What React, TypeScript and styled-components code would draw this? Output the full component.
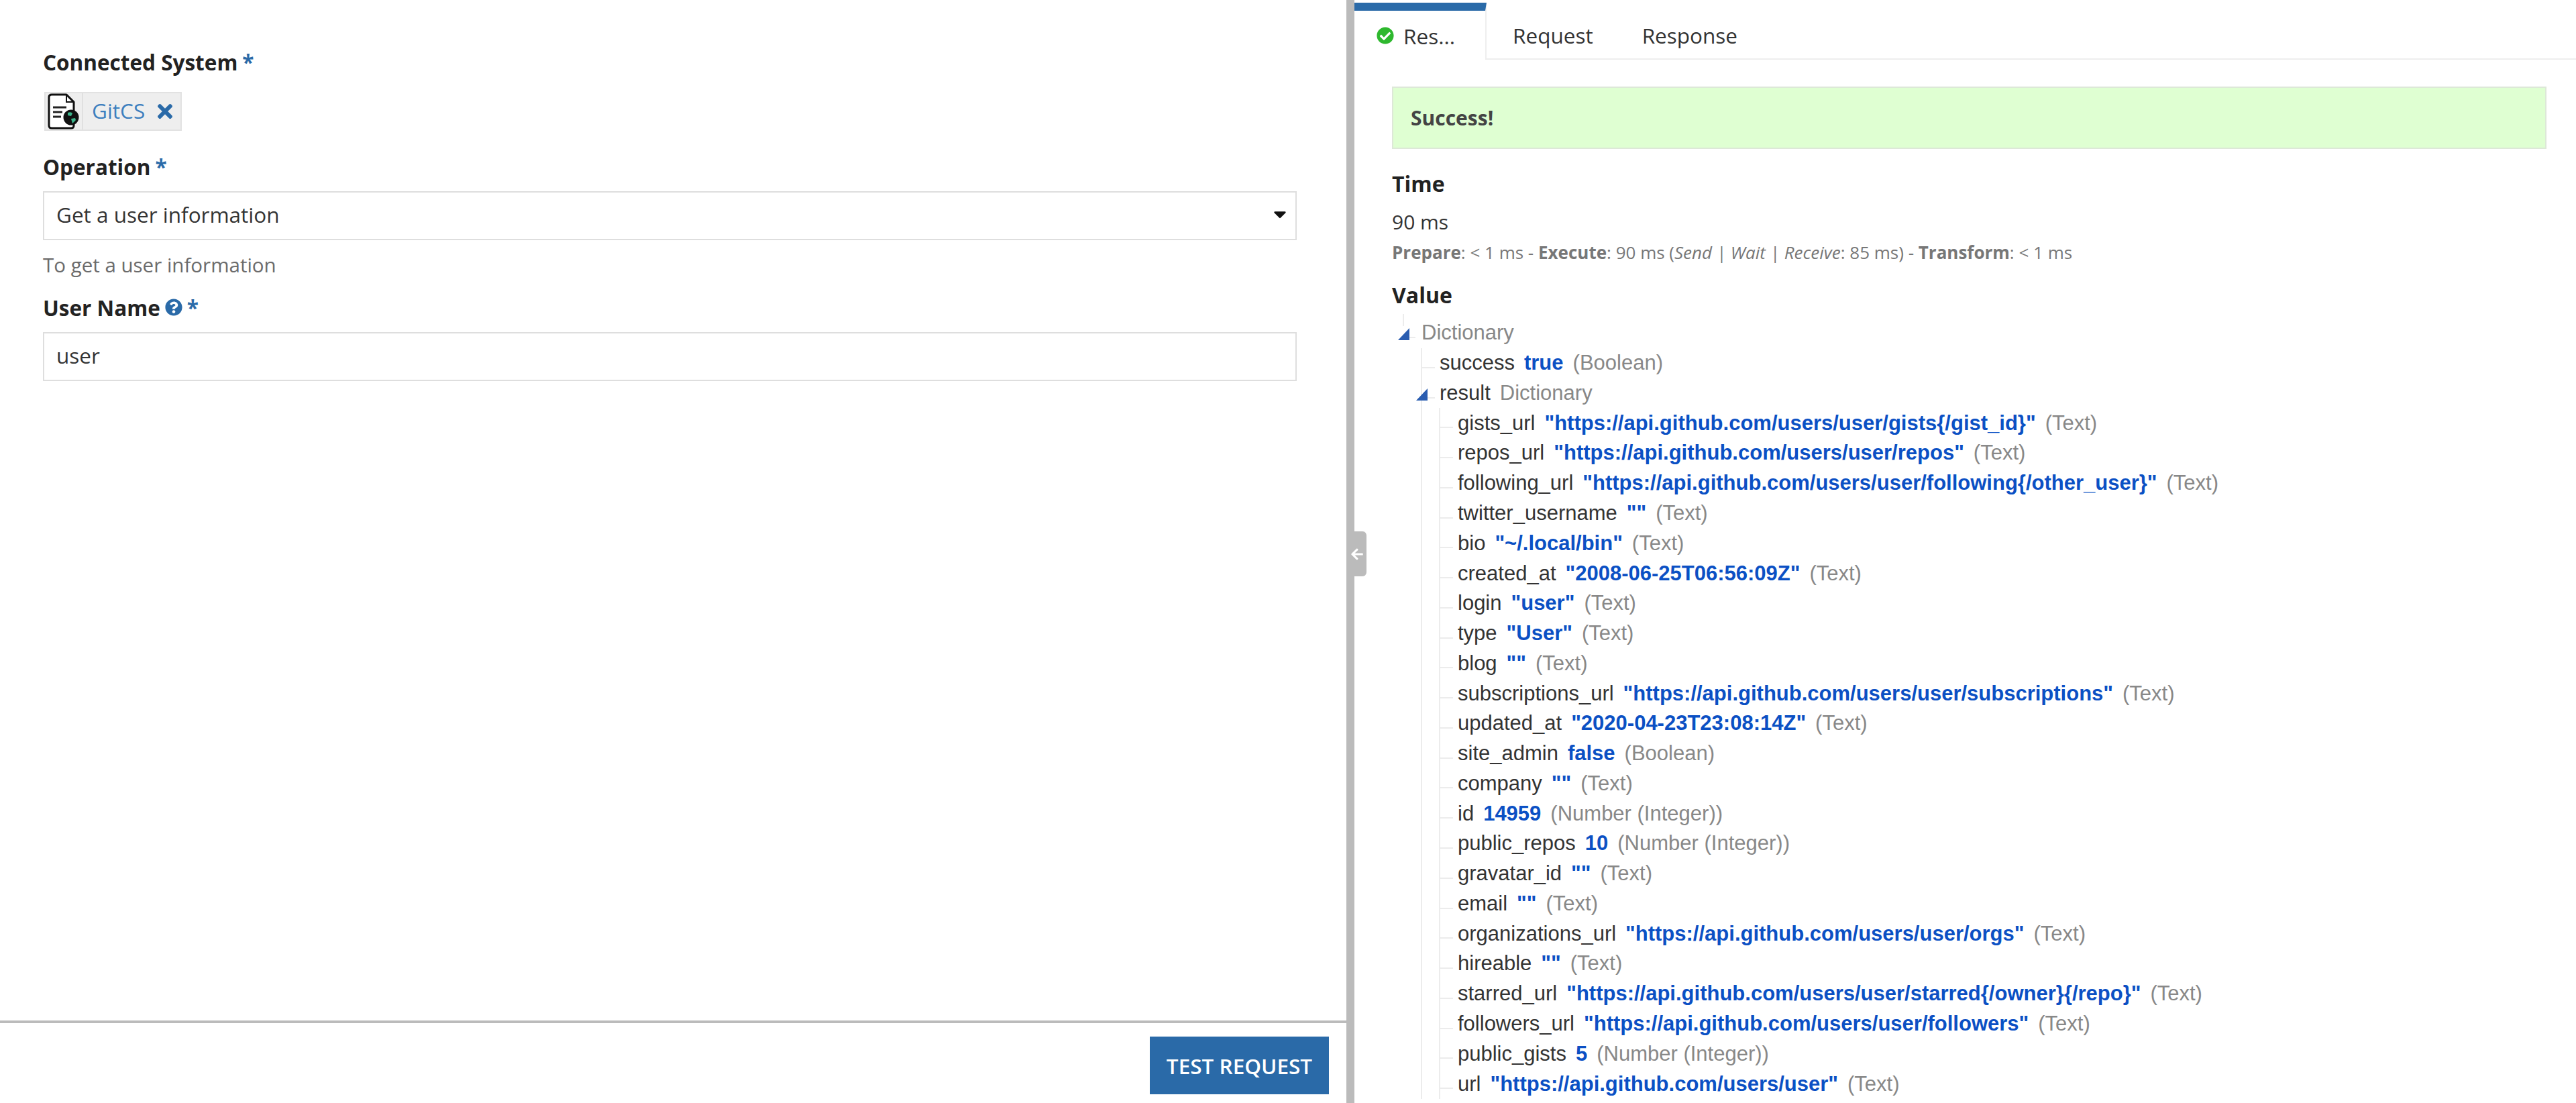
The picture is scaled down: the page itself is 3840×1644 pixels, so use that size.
import React from 'react'
import styled, { createGlobalStyle } from 'styled-components'
import { FaArrowLeft, FaCaretDown, FaCheckCircle, FaQuestionCircle, FaTimes } from 'react-icons/fa'

const GlobalStyle = createGlobalStyle`
  html, body { margin: 0; padding: 0; background: #fff; overflow: hidden; }
  * { box-sizing: border-box; }
  body { font-family: "Open Sans", "Liberation Sans", sans-serif; color: #222; }
`

const Page = styled.div`
  position: relative;
  display: grid;
  grid-template-columns: 2007px 12px 1fr;
  height: 100vh;
  overflow: hidden;
`

const LeftPanel = styled.section`
  display: flex;
  flex-direction: column;
  min-height: 0;
`

const Form = styled.div`
  flex: 1;
  padding: 72px 74px 0 64px;
`

const Field = styled.div<{ $gap?: number }>`
  margin-bottom: ${p => p.$gap ?? 0}px;
`

const Label = styled.div`
  display: flex;
  align-items: center;
  gap: 7px;
  height: 40px;
  font-size: 31.5px;
  font-weight: 700;
  color: #222;
`

const Required = styled.span`
  color: #2a6aa8;
  font-weight: 700;
`

const HelpIcon = styled(FaQuestionCircle)`
  color: #2a6aa8;
  font-size: 26px;
`

const Chip = styled.div`
  display: inline-flex;
  align-items: stretch;
  height: 58px;
  margin: 25px 0 0 2px;
  background: #eee;
  border: 2px solid #e2e2e2;
`

const ChipIcon = styled.div`
  display: flex;
  align-items: center;
  justify-content: center;
  width: 56px;
  border-right: 2px solid #e0e0e0;
`

const ChipName = styled.span`
  display: flex;
  align-items: center;
  padding: 0 14px 4px 13px;
  font-size: 31.5px;
  color: #3d7fbe;
`

const ChipRemove = styled(FaTimes)`
  align-self: center;
  margin-right: 7px;
  color: #2a6aa8;
  font-size: 32px;
`

const Control = styled.div`
  display: flex;
  align-items: center;
  justify-content: space-between;
  height: 73px;
  margin-top: 17px;
  padding: 0 8px 5px 18px;
  background: #fff;
  border: 2px solid #dedede;
  font-size: 31.5px;
  color: #333;
`

const Caret = styled(FaCaretDown)`
  color: #111;
  font-size: 30px;
`

const Hint = styled.div`
  margin-top: 17px;
  font-size: 29.5px;
  line-height: 40px;
  color: #6b6b6b;
`

const Footer = styled.div`
  display: flex;
  justify-content: flex-end;
  height: 123px;
  padding: 20px 26px 0 0;
  border-top: 4px solid #bbb;
`

const TestButton = styled.button`
  width: 267px;
  height: 86px;
  border: 0;
  background: #2a6aa8;
  color: #fff;
  font-family: inherit;
  font-size: 31.5px;
  font-weight: 600;
`

const Divider = styled.div`
  background: #bbb;
`

const DividerKnob = styled.div`
  position: absolute;
  left: 2007px;
  top: 792px;
  display: flex;
  align-items: center;
  justify-content: flex-end;
  width: 30px;
  height: 67px;
  padding-right: 4px;
  background: #bbb;
  border-radius: 0 6px 6px 0;
  color: #fff;
  font-size: 20px;
`

const RightPanel = styled.section`
  min-width: 0;
  overflow: hidden;
`

const Tabs = styled.div`
  display: flex;
  height: 89px;
  padding-top: 4px;
  border-bottom: 2px solid #eee;
`

const Tab = styled.div<{ $active?: boolean }>`
  display: flex;
  align-items: center;
  gap: 14px;
  font-size: 31.5px;
  color: #333;
  ${p => p.$active
    ? `
      width: 197px;
      margin-bottom: -2px;
      padding: 1px 0 0 33px;
      background: #fff;
      border-top: 12px solid #2a6aa8;
      border-right: 2px solid #eee;
    `
    : `
      margin-left: 39px;
      margin-right: 34px;
      padding-top: 13px;
    `}
`

const CheckIcon = styled(FaCheckCircle)`
  color: #2eb82e;
  font-size: 26px;
`

const Body = styled.div`
  padding: 40px 44px 0 56px;
`

const Banner = styled.div`
  display: flex;
  align-items: center;
  height: 93px;
  padding-left: 26px;
  background: #dfffd2;
  border: 2px solid #dde8d8;
  font-size: 30px;
  font-weight: 700;
  color: #444;
`

const SectionTitle = styled.h3<{ $top: number }>`
  margin: ${p => p.$top}px 0 0;
  font-size: 32px;
  line-height: 40px;
  font-weight: 700;
  color: #222;
`

const TimeValue = styled.div`
  margin-top: 17px;
  font-size: 30px;
  line-height: 40px;
  color: #333;
`

const TimeDetail = styled.div`
  margin-top: 7px;
  font-size: 26px;
  line-height: 36px;
  color: #777;
  b { font-weight: 700; }
  i { font-style: italic; }
`

const Tree = styled.div`
  position: relative;
  margin-top: 14px;
  padding-left: 16px;
  font-family: "Liberation Sans", Arial, sans-serif;
  font-size: 31px;
`

const Branch = styled.ul<{ $root?: boolean }>`
  margin: 0;
  padding: 0;
  list-style: none;
  margin-left: ${p => (p.$root ? 0 : -1)}px;
  border-left: 2px solid ${p => (p.$root ? 'transparent' : '#ececec')};
`

const Node = styled.li<{ $root?: boolean }>`
  position: relative;
  padding-left: 26px;
  &::before {
    content: '';
    position: absolute;
    left: ${p => (p.$root ? -2 : 0)}px;
    top: 28px;
    width: 19px;
    height: 2px;
    background: #ececec;
  }
`

const Row = styled.div`
  display: flex;
  align-items: center;
  gap: 14px;
  height: 44.77px;
  white-space: nowrap;
`

const RootStub = styled.span`
  position: absolute;
  left: -2px;
  top: -6px;
  width: 2px;
  height: 18px;
  background: #ececec;
`

const Key = styled.span`
  color: #333;
`

const Val = styled.span`
  color: #0b50c4;
  font-weight: 700;
`

const Muted = styled.span`
  color: #888;
`

const Toggle = styled.svg`
  position: absolute;
  left: -9px;
  top: 15px;
  width: 18px;
  height: 18px;
  fill: #2a5db0;
`

const Triangle = () => (
  <Toggle viewBox="0 0 18 18">
    <path d="M17 0 V18 H0 Z" />
  </Toggle>
)

const ConnectedSystemIcon = () => (
  <svg width="48" height="54" viewBox="0 0 48 54">
    <path d="M6 2 H28 L39 13 V48 Q39 52 35 52 H6 Q2 52 2 48 V6 Q2 2 6 2 Z" fill="#fff" stroke="#111" strokeWidth="3" strokeLinejoin="round" />
    <path d="M28 2 V13 H39" fill="none" stroke="#111" strokeWidth="2" />
    <path d="M8 21 H28 M8 28 H22 M8 35 H20" stroke="#222" strokeWidth="3" />
    <circle cx="35" cy="36" r="11.5" fill="#111" />
    <path d="M30 29 q5 -2 7 1 l-2 4 l-5 -1 Z M35 38 l6 -1 l1 3 l-5 5 Z" fill="#3cb58c" />
  </svg>
)

type Entry = [key: string, value: string, type: string]

const entries: Entry[] = [
  ['gists_url', '"https://api.github.com/users/user/gists{/gist_id}"', '(Text)'],
  ['repos_url', '"https://api.github.com/users/user/repos"', '(Text)'],
  ['following_url', '"https://api.github.com/users/user/following{/other_user}"', '(Text)'],
  ['twitter_username', '""', '(Text)'],
  ['bio', '"~/.local/bin"', '(Text)'],
  ['created_at', '"2008-06-25T06:56:09Z"', '(Text)'],
  ['login', '"user"', '(Text)'],
  ['type', '"User"', '(Text)'],
  ['blog', '""', '(Text)'],
  ['subscriptions_url', '"https://api.github.com/users/user/subscriptions"', '(Text)'],
  ['updated_at', '"2020-04-23T23:08:14Z"', '(Text)'],
  ['site_admin', 'false', '(Boolean)'],
  ['company', '""', '(Text)'],
  ['id', '14959', '(Number (Integer))'],
  ['public_repos', '10', '(Number (Integer))'],
  ['gravatar_id', '""', '(Text)'],
  ['email', '""', '(Text)'],
  ['organizations_url', '"https://api.github.com/users/user/orgs"', '(Text)'],
  ['hireable', '""', '(Text)'],
  ['starred_url', '"https://api.github.com/users/user/starred{/owner}{/repo}"', '(Text)'],
  ['followers_url', '"https://api.github.com/users/user/followers"', '(Text)'],
  ['public_gists', '5', '(Number (Integer))'],
  ['url', '"https://api.github.com/users/user"', '(Text)'],
]

const ValueRow = ({ entry: [key, value, type] }: { entry: Entry }) => (
  <Node>
    <Row>
      <Key>{key}</Key>
      <Val>{value}</Val>
      <Muted>{type}</Muted>
    </Row>
  </Node>
)

const App = () => {
  return (
    <Page>
      <GlobalStyle />
      <LeftPanel>
        <Form>
          <Field $gap={30}>
            <Label>Connected System <Required>*</Required></Label>
            <Chip>
              <ChipIcon><ConnectedSystemIcon /></ChipIcon>
              <ChipName>GitCS</ChipName>
              <ChipRemove />
            </Chip>
          </Field>
          <Field $gap={23}>
            <Label>Operation <Required>*</Required></Label>
            <Control>
              Get a user information
              <Caret />
            </Control>
            <Hint>To get a user information</Hint>
          </Field>
          <Field>
            <Label>User Name <HelpIcon /> <Required>*</Required></Label>
            <Control>user</Control>
          </Field>
        </Form>
        <Footer>
          <TestButton>TEST REQUEST</TestButton>
        </Footer>
      </LeftPanel>

      <Divider />
      <DividerKnob><FaArrowLeft /></DividerKnob>

      <RightPanel>
        <Tabs>
          <Tab $active><CheckIcon /> Res...</Tab>
          <Tab>Request</Tab>
          <Tab>Response</Tab>
        </Tabs>
        <Body>
          <Banner>Success!</Banner>
          <SectionTitle $top={32}>Time</SectionTitle>
          <TimeValue>90 ms</TimeValue>
          <TimeDetail>
            <b>Prepare</b>: &lt; 1 ms - <b>Execute</b>: 90 ms (<i>Send | Wait | Receive</i>: 85 ms) - <b>Transform</b>: &lt; 1 ms
          </TimeDetail>
          <SectionTitle $top={26}>Value</SectionTitle>
          <Tree>
            <Branch $root>
              <Node $root>
                <RootStub />
                <Triangle />
                <Row><Muted>Dictionary</Muted></Row>
                <Branch>
                  <Node>
                    <Row>
                      <Key>success</Key>
                      <Val>true</Val>
                      <Muted>(Boolean)</Muted>
                    </Row>
                  </Node>
                  <Node>
                    <Triangle />
                    <Row>
                      <Key>result</Key>
                      <Muted>Dictionary</Muted>
                    </Row>
                    <Branch>
                      {entries.map(entry => (
                        <ValueRow key={entry[0]} entry={entry} />
                      ))}
                    </Branch>
                  </Node>
                </Branch>
              </Node>
            </Branch>
          </Tree>
        </Body>
      </RightPanel>
    </Page>
  )
}

export default App
